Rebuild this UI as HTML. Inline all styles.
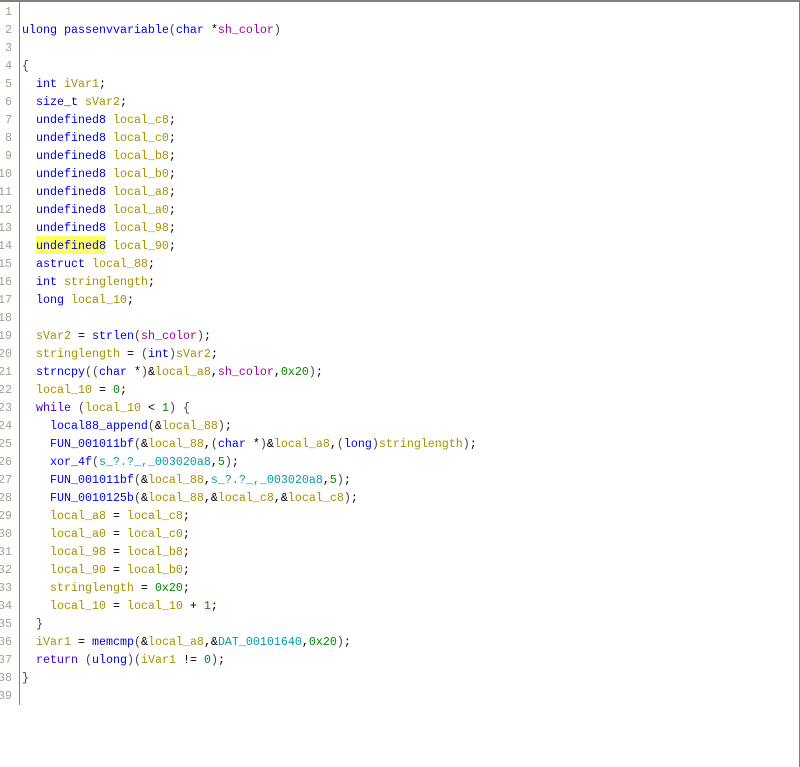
<!DOCTYPE html>
<html>
<head>
<meta charset="utf-8">
<style>
html,body{margin:0;padding:0;background:#fff;}
#p{position:relative;width:800px;height:767px;overflow:hidden;background:#fff;font-family:"Liberation Mono",monospace;font-size:11.67px;line-height:18px;color:#000;}
#top{position:absolute;left:0;top:0;width:800px;height:2px;background:#808080;}
#right{position:absolute;left:799px;top:0;width:1px;height:767px;background:#808080;}
#sep{position:absolute;left:19px;top:0;width:1px;height:705px;background:#808080;}
#hl{position:absolute;left:36px;top:236px;width:70px;height:18px;background:#ffff66;}
.n{position:absolute;left:-8px;width:20px;margin-top:1px;text-align:right;color:#a89c90;white-space:pre;}
.l{position:absolute;left:22px;margin-top:1px;white-space:pre;}
.k{color:#0000e6}.f{color:#0000ff}.v{color:#a89000}.a{color:#a000a0}.c{color:#008a00}.g{color:#00a0a0}.b{color:#444}.w{color:#3a00d8}
</style>
</head>
<body>
<div id="p">
<div id="top"></div><div id="right"></div><div id="sep"></div><div id="hl"></div>
<div class="n" style="top:2px">1</div>
<div class="n" style="top:20px">2</div>
<div class="n" style="top:38px">3</div>
<div class="n" style="top:56px">4</div>
<div class="n" style="top:74px">5</div>
<div class="n" style="top:92px">6</div>
<div class="n" style="top:110px">7</div>
<div class="n" style="top:128px">8</div>
<div class="n" style="top:146px">9</div>
<div class="n" style="top:164px">10</div>
<div class="n" style="top:182px">11</div>
<div class="n" style="top:200px">12</div>
<div class="n" style="top:218px">13</div>
<div class="n" style="top:236px">14</div>
<div class="n" style="top:254px">15</div>
<div class="n" style="top:272px">16</div>
<div class="n" style="top:290px">17</div>
<div class="n" style="top:308px">18</div>
<div class="n" style="top:326px">19</div>
<div class="n" style="top:344px">20</div>
<div class="n" style="top:362px">21</div>
<div class="n" style="top:380px">22</div>
<div class="n" style="top:398px">23</div>
<div class="n" style="top:416px">24</div>
<div class="n" style="top:434px">25</div>
<div class="n" style="top:452px">26</div>
<div class="n" style="top:470px">27</div>
<div class="n" style="top:488px">28</div>
<div class="n" style="top:506px">29</div>
<div class="n" style="top:524px">30</div>
<div class="n" style="top:542px">31</div>
<div class="n" style="top:560px">32</div>
<div class="n" style="top:578px">33</div>
<div class="n" style="top:596px">34</div>
<div class="n" style="top:614px">35</div>
<div class="n" style="top:632px">36</div>
<div class="n" style="top:650px">37</div>
<div class="n" style="top:668px">38</div>
<div class="n" style="top:686px">39</div>

<div class="l" style="top:20px"><span class="k">ulong</span> <span class="f">passenvvariable</span><span class="b">(</span><span class="k">char</span> *<span class="a">sh_color</span><span class="b">)</span></div>
<div class="l" style="top:56px"><span class="b">{</span></div>
<div class="l" style="top:74px">  <span class="k">int</span> <span class="v">iVar1</span>;</div>
<div class="l" style="top:92px">  <span class="k">size_t</span> <span class="v">sVar2</span>;</div>
<div class="l" style="top:110px">  <span class="k">undefined8</span> <span class="v">local_c8</span>;</div>
<div class="l" style="top:128px">  <span class="k">undefined8</span> <span class="v">local_c0</span>;</div>
<div class="l" style="top:146px">  <span class="k">undefined8</span> <span class="v">local_b8</span>;</div>
<div class="l" style="top:164px">  <span class="k">undefined8</span> <span class="v">local_b0</span>;</div>
<div class="l" style="top:182px">  <span class="k">undefined8</span> <span class="v">local_a8</span>;</div>
<div class="l" style="top:200px">  <span class="k">undefined8</span> <span class="v">local_a0</span>;</div>
<div class="l" style="top:218px">  <span class="k">undefined8</span> <span class="v">local_98</span>;</div>
<div class="l" style="top:236px">  <span class="k">undefined8</span> <span class="v">local_90</span>;</div>
<div class="l" style="top:254px">  <span class="k">astruct</span> <span class="v">local_88</span>;</div>
<div class="l" style="top:272px">  <span class="k">int</span> <span class="v">stringlength</span>;</div>
<div class="l" style="top:290px">  <span class="k">long</span> <span class="v">local_10</span>;</div>
<div class="l" style="top:326px">  <span class="v">sVar2</span> = <span class="f">strlen</span><span class="b">(</span><span class="a">sh_color</span><span class="b">)</span>;</div>
<div class="l" style="top:344px">  <span class="v">stringlength</span> = <span class="b">(</span><span class="k">int</span><span class="b">)</span><span class="v">sVar2</span>;</div>
<div class="l" style="top:362px">  <span class="f">strncpy</span><span class="b">((</span><span class="k">char</span> *<span class="b">)</span>&amp;<span class="v">local_a8</span>,<span class="a">sh_color</span>,<span class="c">0x20</span><span class="b">)</span>;</div>
<div class="l" style="top:380px">  <span class="v">local_10</span> = <span class="c">0</span>;</div>
<div class="l" style="top:398px">  <span class="w">while</span> <span class="b">(</span><span class="v">local_10</span> &lt; <span class="c">1</span><span class="b">)</span> <span class="b">{</span></div>
<div class="l" style="top:416px">    <span class="f">local88_append</span><span class="b">(</span>&amp;<span class="v">local_88</span><span class="b">)</span>;</div>
<div class="l" style="top:434px">    <span class="f">FUN_001011bf</span><span class="b">(</span>&amp;<span class="v">local_88</span>,<span class="b">(</span><span class="k">char</span> *<span class="b">)</span>&amp;<span class="v">local_a8</span>,<span class="b">(</span><span class="k">long</span><span class="b">)</span><span class="v">stringlength</span><span class="b">)</span>;</div>
<div class="l" style="top:452px">    <span class="f">xor_4f</span><span class="b">(</span><span class="g">s_?.?_,_003020a8</span>,<span class="c">5</span><span class="b">)</span>;</div>
<div class="l" style="top:470px">    <span class="f">FUN_001011bf</span><span class="b">(</span>&amp;<span class="v">local_88</span>,<span class="g">s_?.?_,_003020a8</span>,<span class="c">5</span><span class="b">)</span>;</div>
<div class="l" style="top:488px">    <span class="f">FUN_0010125b</span><span class="b">(</span>&amp;<span class="v">local_88</span>,&amp;<span class="v">local_c8</span>,&amp;<span class="v">local_c8</span><span class="b">)</span>;</div>
<div class="l" style="top:506px">    <span class="v">local_a8</span> = <span class="v">local_c8</span>;</div>
<div class="l" style="top:524px">    <span class="v">local_a0</span> = <span class="v">local_c0</span>;</div>
<div class="l" style="top:542px">    <span class="v">local_98</span> = <span class="v">local_b8</span>;</div>
<div class="l" style="top:560px">    <span class="v">local_90</span> = <span class="v">local_b0</span>;</div>
<div class="l" style="top:578px">    <span class="v">stringlength</span> = <span class="c">0x20</span>;</div>
<div class="l" style="top:596px">    <span class="v">local_10</span> = <span class="v">local_10</span> + <span class="c">1</span>;</div>
<div class="l" style="top:614px">  <span class="b">}</span></div>
<div class="l" style="top:632px">  <span class="v">iVar1</span> = <span class="f">memcmp</span><span class="b">(</span>&amp;<span class="v">local_a8</span>,&amp;<span class="g">DAT_00101640</span>,<span class="c">0x20</span><span class="b">)</span>;</div>
<div class="l" style="top:650px">  <span class="w">return</span> <span class="b">(</span><span class="k">ulong</span><span class="b">)(</span><span class="v">iVar1</span> != <span class="c">0</span><span class="b">)</span>;</div>
<div class="l" style="top:668px"><span class="b">}</span></div>
</div>
</body>
</html>
